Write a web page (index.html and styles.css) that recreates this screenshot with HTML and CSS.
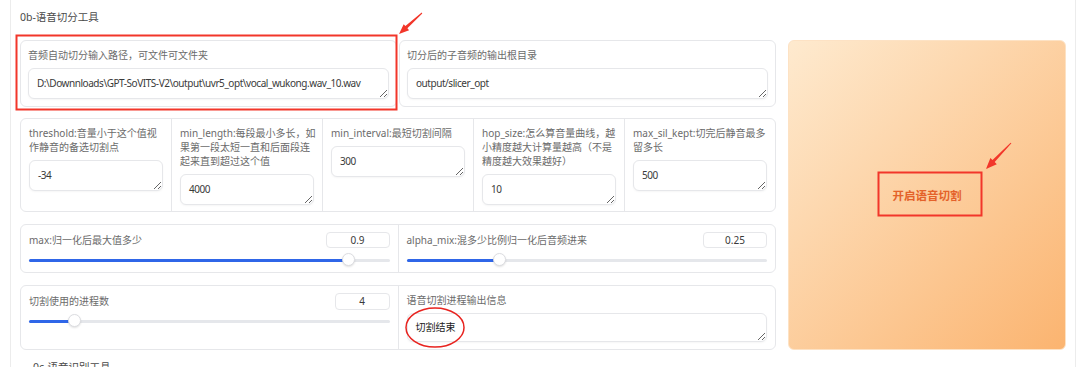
FILE: index.html
```html
<!DOCTYPE html>
<html lang="zh-CN">
<head>
  <meta charset="UTF-8">
  <title>0b-语音切分工具</title>
  <link rel="stylesheet" href="styles.css">
</head>
<body>
<div class="pagina">

  <!-- Panel de la herramienta -->
  <div class="panel">
    <div class="titulo">0b-语音切分工具</div>

    <div class="principal">
      <div class="columna">

        <!-- Rutas -->
        <div class="fila">
          <div class="tarjeta">
            <label>音频自动切分输入路径，可文件可文件夹</label>
            <textarea rows="1" wrap="off">D:\Downnloads\GPT-SoVITS-V2\output\uvr5_opt\vocal_wukong.wav_10.wav</textarea>
          </div>
          <div class="tarjeta">
            <label>切分后的子音频的输出根目录</label>
            <textarea rows="1" wrap="off">output/slicer_opt</textarea>
          </div>
        </div>

        <!-- Parametros -->
        <div class="tarjeta grupo parametros">
          <div class="campo">
            <label>threshold:音量小于这个值视作静音的备选切割点</label>
            <textarea rows="1">-34</textarea>
          </div>
          <div class="campo">
            <label>min_length:每段最小多长，如果第一段太短一直和后面段连起来直到超过这个值</label>
            <textarea rows="1">4000</textarea>
          </div>
          <div class="campo">
            <label>min_interval:最短切割间隔</label>
            <textarea rows="1">300</textarea>
          </div>
          <div class="campo">
            <label>hop_size:怎么算音量曲线，越小精度越大计算量越高（不是精度越大效果越好）</label>
            <textarea rows="1">10</textarea>
          </div>
          <div class="campo">
            <label>max_sil_kept:切完后静音最多留多长</label>
            <textarea rows="1">500</textarea>
          </div>
        </div>

        <!-- Deslizadores -->
        <div class="tarjeta grupo">
          <div class="campo">
            <div class="cabecera">
              <label>max:归一化后最大值多少</label>
              <div class="numero">0.9</div>
            </div>
            <div class="deslizador">
              <div class="relleno" style="width: 88.4%;"></div>
              <div class="perilla" style="left: 88.4%;"></div>
            </div>
          </div>
          <div class="campo">
            <div class="cabecera">
              <label>alpha_mix:混多少比例归一化后音频进来</label>
              <div class="numero">0.25</div>
            </div>
            <div class="deslizador">
              <div class="relleno" style="width: 25.7%;"></div>
              <div class="perilla" style="left: 25.7%;"></div>
            </div>
          </div>
        </div>

        <div class="tarjeta grupo">
          <div class="campo">
            <div class="cabecera">
              <label>切割使用的进程数</label>
              <div class="numero corto">4</div>
            </div>
            <div class="deslizador">
              <div class="relleno" style="width: 12.5%;"></div>
              <div class="perilla" style="left: 12.5%;"></div>
            </div>
          </div>
          <div class="campo">
            <label>语音切割进程输出信息</label>
            <textarea rows="1" class="salida">切割结束</textarea>
          </div>
        </div>

      </div>

      <button class="boton">开启语音切割</button>
    </div>

    <div class="titulo siguiente">0c-语音识别工具</div>
  </div>

  <!-- Anotaciones en rojo -->
  <svg class="notas" width="1080" height="367" viewBox="0 0 1080 367">
    <rect x="16.5" y="35.5" width="380" height="74" fill="none" stroke="#f2362a" stroke-width="2"/>
    <polygon fill="#f2362a" points="422.3,13.4 407.4,28.3 409.1,30.2 399,34 403.7,24.2 405.4,26.1 421.7,12.6"/>
    <rect x="878.5" y="172.5" width="103" height="43" fill="none" stroke="#f2362a" stroke-width="2"/>
    <polygon fill="#f2362a" points="1011.4,143.3 994.7,162.1 996.8,164.2 986,169 990.4,158 992.5,160.1 1010.6,142.7"/>
    <ellipse cx="435" cy="327.5" rx="29" ry="19.5" fill="none" stroke="#e8231f" stroke-width="1.5"/>
  </svg>

</div>
</body>
</html>
```

FILE: styles.css
```css
body {
  margin: 0;
  padding: 0;
  background: #ffffff;
  font-family: "Noto Sans", "Noto Sans CJK SC", sans-serif;
  font-size: 10px;
  line-height: 14px;
  color: #6b6b6b;
}

.pagina {
  position: relative;
  width: 1080px;
  height: 367px;
  overflow: hidden;
}

/* Panel general */
.panel {
  margin-left: 10px;
  width: 1046px;
  padding: 10px 9px 0 9px;
  border-left: 1px solid #ececec;
  border-right: 1px solid #ececec;
}

.titulo {
  font-size: 10.5px;
  color: #4a4a4a;
  margin-bottom: 16px;
}

.siguiente {
  margin-top: 10px;
  padding-left: 13px;
}

.principal {
  display: flex;
  gap: 12px;
}

.columna {
  width: 756px;
  display: flex;
  flex-direction: column;
  gap: 12px;
}

.fila {
  display: flex;
  gap: 2px;
  margin-bottom: -1px;
}

.fila .tarjeta {
  flex: 1;
}

/* Tarjetas */
.tarjeta {
  background: #fff;
  border: 1px solid #e6e7ea;
  border-radius: 6px;
  padding: 7px;
}

.grupo {
  display: flex;
  padding: 0;
}

.campo {
  flex: 1;
  padding: 7px 8px;
  box-sizing: border-box;
}

.campo + .campo {
  border-left: 1px solid #e6e7ea;
}

.parametros .campo {
  padding-bottom: 6px;
}

.parametros label {
  margin-right: -2px;
}

label {
  display: block;
  color: #6b6b6b;
}

textarea {
  display: block;
  width: 100%;
  height: 31px;
  box-sizing: border-box;
  margin: 6px 0 0;
  padding: 7px 8px;
  border: 1px solid #e6e7ea;
  border-radius: 6px;
  box-shadow: 0 1px 2px rgba(0,0,0,0.04);
  font-family: inherit;
  font-size: 10px;
  line-height: 15px;
  letter-spacing: -0.45px;
  color: #3a3a3a;
  background: #fff;
  resize: vertical;
  overflow: hidden;
  white-space: pre;
}

.salida {
  height: 29px;
  padding: 6px 8px;
  letter-spacing: 0;
  color: #222;
}

/* Deslizadores */
.cabecera {
  display: flex;
  justify-content: space-between;
  align-items: center;
  height: 16px;
}

.numero {
  width: 64px;
  height: 16px;
  box-sizing: border-box;
  border: 1px solid #e6e7ea;
  border-radius: 4px;
  text-align: center;
  line-height: 14px;
  color: #3a3a3a;
}

.numero.corto {
  width: 55px;
  height: 17px;
}

.deslizador {
  position: relative;
  height: 3px;
  margin: 11px 0 3px;
  background: #e5e7eb;
  border-radius: 2px;
}

.relleno {
  height: 3px;
  background: #2f66e8;
  border-radius: 2px;
}

.perilla {
  position: absolute;
  top: -6px;
  width: 13px;
  height: 13px;
  margin-left: -6px;
  box-sizing: border-box;
  background: #fff;
  border: 1px solid #dcdde1;
  border-radius: 50%;
  box-shadow: 0 1px 2px rgba(0,0,0,0.12);
}

/* Boton principal */
.boton {
  width: 278px;
  border: 1px solid #fde2c4;
  border-radius: 6px;
  background: linear-gradient(135deg, #feeacf, #fbb470);
  color: #e4622a;
  font-family: inherit;
  font-size: 11.5px;
  font-weight: bold;
  cursor: pointer;
}

.notas {
  position: absolute;
  top: 0;
  left: 0;
  pointer-events: none;
}
```
